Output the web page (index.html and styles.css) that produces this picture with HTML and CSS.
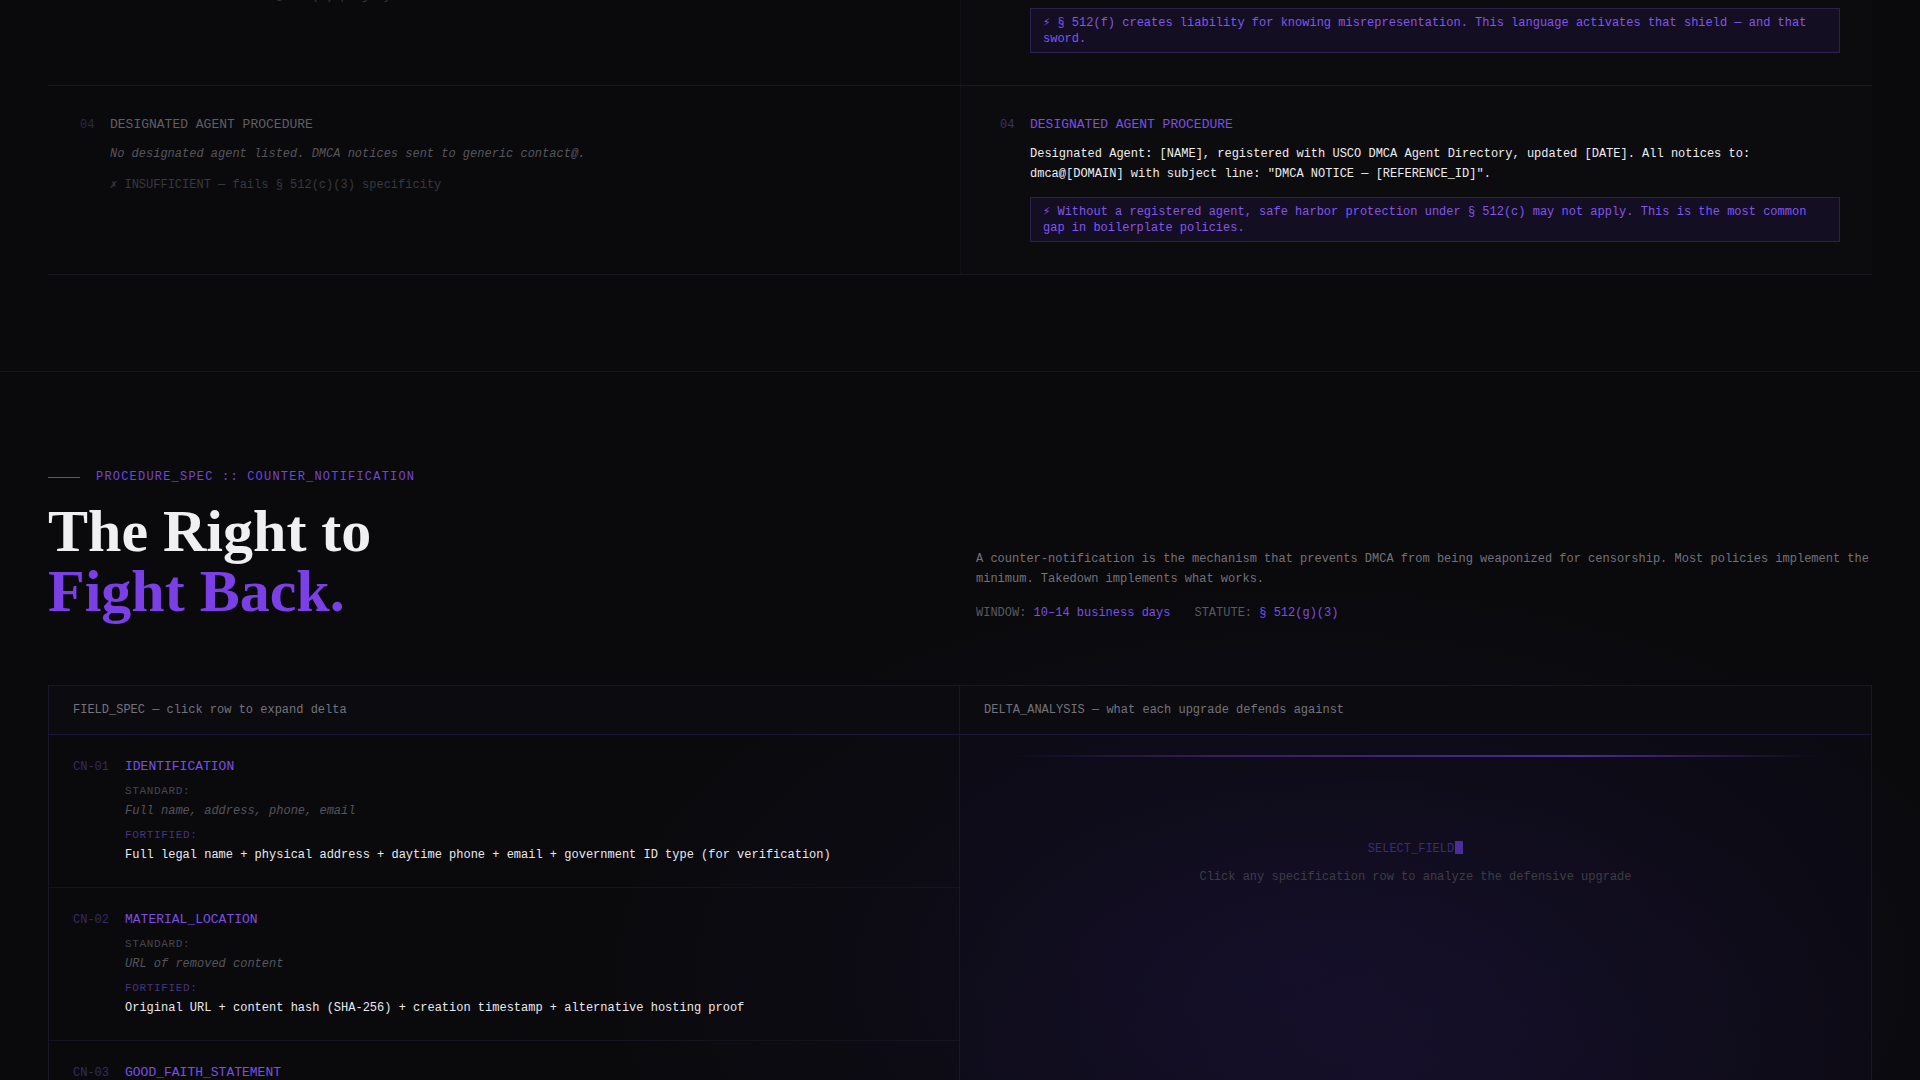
FILE: index.html
```html
<!DOCTYPE html>
<html lang="en">
<head>
    <meta charset="UTF-8">
    <meta name="viewport" content="width=device-width, initial-scale=1.0">
    <title>Takedown — Procedure Spec</title>
    <link rel="stylesheet" href="styles.css">
</head>
<body>
    <section class="compare">
        <div class="cmp-table">
            <div class="cmp-row">
                <div class="cmp-cell std">
                    <span class="cmp-num">03</span>
                    <div class="cmp-body">
                        <div class="cmp-title">GOOD FAITH STATEMENT</div>
                        <p class="cmp-text">"I have a good faith belief that use of the material is not authorized."</p>
                        <div class="cmp-fail">✗ INSUFFICIENT — lacks § 512(f) perjury clause</div>
                    </div>
                </div>
                <div class="cmp-cell fort">
                    <span class="cmp-num">03</span>
                    <div class="cmp-body">
                        <div class="cmp-title">GOOD FAITH STATEMENT</div>
                        <p class="cmp-text">Complainant swears, under penalty of perjury, that the notice is accurate and that they are the owner or authorized to act on behalf of the owner of the exclusive right.</p>
                        <div class="cmp-note">⚡ § 512(f) creates liability for knowing misrepresentation. This language activates that shield — and that sword.</div>
                    </div>
                </div>
            </div>
            <div class="cmp-row">
                <div class="cmp-cell std">
                    <span class="cmp-num">04</span>
                    <div class="cmp-body">
                        <div class="cmp-title">DESIGNATED AGENT PROCEDURE</div>
                        <p class="cmp-text">No designated agent listed. DMCA notices sent to generic contact@.</p>
                        <div class="cmp-fail">✗ INSUFFICIENT — fails § 512(c)(3) specificity</div>
                    </div>
                </div>
                <div class="cmp-cell fort">
                    <span class="cmp-num">04</span>
                    <div class="cmp-body">
                        <div class="cmp-title">DESIGNATED AGENT PROCEDURE</div>
                        <p class="cmp-text">Designated Agent: [NAME], registered with USCO DMCA Agent Directory, updated [DATE]. All notices to: dmca@[DOMAIN] with subject line: "DMCA NOTICE — [REFERENCE_ID]".</p>
                        <div class="cmp-note">⚡ Without a registered agent, safe harbor protection under § 512(c) may not apply. This is the most common gap in boilerplate policies.</div>
                    </div>
                </div>
            </div>
        </div>
    </section>

    <section class="counter">
        <div class="intro">
            <div class="intro-left">
                <div class="eyebrow"><span class="eyebrow-line"></span>PROCEDURE_SPEC :: COUNTER_NOTIFICATION</div>
                <h2 class="headline">The Right to<br><em>Fight Back.</em></h2>
            </div>
            <div class="intro-right">
                <p>A counter-notification is the mechanism that prevents DMCA from being weaponized for censorship. Most policies implement the minimum. Takedown implements what works.</p>
                <div class="meta"><span class="meta-item">WINDOW: <b>10–14 business days</b></span><span class="meta-item">STATUTE: <b>§ 512(g)(3)</b></span></div>
            </div>
        </div>

        <div class="spec-panel">
            <div class="spec-list">
                <div class="panel-head">FIELD_SPEC — click row to expand delta</div>

                <div class="spec-row">
                    <span class="spec-code">CN-01</span>
                    <div class="spec-body">
                        <div class="spec-name">IDENTIFICATION</div>
                        <div class="spec-label">STANDARD:</div>
                        <div class="spec-std">Full name, address, phone, email</div>
                        <div class="spec-label fortified">FORTIFIED:</div>
                        <div class="spec-fort">Full legal name + physical address + daytime phone + email + government ID type (for verification)</div>
                    </div>
                </div>

                <div class="spec-row">
                    <span class="spec-code">CN-02</span>
                    <div class="spec-body">
                        <div class="spec-name">MATERIAL_LOCATION</div>
                        <div class="spec-label">STANDARD:</div>
                        <div class="spec-std">URL of removed content</div>
                        <div class="spec-label fortified">FORTIFIED:</div>
                        <div class="spec-fort">Original URL + content hash (SHA-256) + creation timestamp + alternative hosting proof</div>
                    </div>
                </div>

                <div class="spec-row">
                    <span class="spec-code">CN-03</span>
                    <div class="spec-body">
                        <div class="spec-name">GOOD_FAITH_STATEMENT</div>
                        <div class="spec-label">STANDARD:</div>
                        <div class="spec-std">Statement of good faith belief that removal was a mistake</div>
                        <div class="spec-label fortified">FORTIFIED:</div>
                        <div class="spec-fort">Sworn statement under penalty of perjury + specific misidentification reason + supporting evidence</div>
                    </div>
                </div>
            </div>

            <div class="delta">
                <div class="panel-head">DELTA_ANALYSIS — what each upgrade defends against</div>
                <div class="delta-body">
                    <div class="delta-line"></div>
                    <div class="delta-empty">
                        <div class="select">SELECT_FIELD<span class="cursor"></span></div>
                        <div class="hint">Click any specification row to analyze the defensive upgrade</div>
                    </div>
                </div>
            </div>
        </div>
    </section>
</body>
</html>
```

FILE: styles.css
```css
body {
    margin: 0;
    background: #0a0a0d;
    color: #e8e8ec;
    font-family: "Liberation Mono", "DejaVu Sans Mono", monospace;
    font-size: 12px;
    line-height: 20px;
    overflow: hidden;
}

/* standard vs fortified comparison table */
.compare {
    padding: 0 48px 96px;
}
.cmp-table {
    margin-top: -103px;
}
.cmp-row {
    display: grid;
    grid-template-columns: 1fr 1fr;
    border-bottom: 1px solid #19191e;
}
.cmp-cell {
    display: flex;
    padding: 29px 32px 32px;
}
.cmp-cell.fort {
    padding-left: 39px;
    background: rgba(255, 255, 255, 0.012);
    border-left: 1px solid #131317;
}
.cmp-num {
    width: 30px;
    flex-shrink: 0;
    font-size: 12px;
    line-height: 21px;
    color: #2b2650;
}
.fort .cmp-num {
    color: #3a3168;
}
.cmp-body {
    flex: 1;
}
.cmp-title {
    font-size: 13px;
    color: #5e5e66;
}
.fort .cmp-title {
    color: #7a4fe2;
}
.cmp-text {
    margin: 9px 0 0;
}
.std .cmp-text {
    font-style: italic;
    color: #55555d;
}
.fort .cmp-text {
    color: #ececf0;
}
.cmp-fail {
    margin-top: 11px;
    color: #38383f;
}
.cmp-note {
    margin-top: 13px;
    padding: 6px 12px 5px;
    line-height: 16px;
    border: 1px solid #2b2050;
    background: #130e21;
    color: #8356ee;
}

/* counter-notification section */
.counter {
    border-top: 1px solid #16141f;
    padding: 97px 48px 96px;
    background:
        radial-gradient(ellipse 1000px 560px at 1300px 600px, rgba(70, 40, 160, 0.12), transparent 70%);
}
.intro {
    display: grid;
    grid-template-columns: 1fr 1fr;
    gap: 32px;
    align-items: end;
}
.eyebrow {
    display: flex;
    align-items: center;
    gap: 16px;
    margin-bottom: 16px;
    font-size: 12px;
    line-height: 16px;
    letter-spacing: 0.1em;
    color: #7145de;
}
.eyebrow-line {
    width: 32px;
    height: 1px;
    background: #6a3fd6;
}
.headline {
    margin: 0;
    font-family: "Liberation Serif", Georgia, serif;
    font-weight: 700;
    font-size: 60px;
    line-height: 60px;
    color: #f0f0f2;
}
.headline em {
    font-style: normal;
    color: #7b3fe6;
}
.intro-right p {
    margin: 0 0 16px;
    color: #72727b;
}
.meta {
    line-height: 16px;
    color: #595962;
}
.meta b {
    font-weight: normal;
    color: #7b4ee6;
}
.meta-item {
    margin-right: 24px;
}

/* field spec panel */
.spec-panel {
    margin-top: 64px;
    display: grid;
    grid-template-columns: 1fr 1fr;
    border: 1px solid #19172a;
}
.spec-list {
    border-right: 1px solid #19172a;
}
.panel-head {
    padding: 16px 24px;
    line-height: 16px;
    background: #0c0c10;
    border-bottom: 1px solid #1d1838;
    color: #73737c;
}
.spec-row {
    display: flex;
    padding: 22px 24px;
    border-bottom: 1px solid #15141e;
}
.spec-code {
    width: 52px;
    flex-shrink: 0;
    font-size: 12px;
    color: #332b62;
}
.spec-name {
    font-size: 13px;
    color: #7a4fe6;
}
.spec-label {
    margin-top: 6px;
    font-size: 11px;
    line-height: 16px;
    letter-spacing: 0.06em;
    color: #46464e;
}
.spec-label.fortified {
    color: #44357f;
}
.spec-std {
    margin-top: 2px;
    font-style: italic;
    color: #54545c;
}
.spec-fort {
    margin-top: 2px;
    color: #e9e9ed;
}

/* delta analysis */
.delta {
    background:
        radial-gradient(ellipse 75% 85% at 50% 80%, rgba(80, 45, 180, 0.08), transparent 75%),
        rgba(124, 58, 237, 0.02);
}
.delta-body {
    padding: 20px 48px;
}
.delta-line {
    height: 2px;
    background: linear-gradient(90deg, transparent, rgba(124, 58, 237, 0.35) 25%, rgba(124, 58, 237, 0.6) 70%, transparent);
}
.delta-empty {
    padding-top: 82px;
    text-align: center;
}
.select {
    color: #3b2d72;
}
.cursor {
    display: inline-block;
    width: 8px;
    height: 13px;
    margin-left: 1px;
    vertical-align: -2px;
    background: #4a2e9c;
}
.hint {
    margin-top: 8px;
    color: #3d3d46;
}
```
